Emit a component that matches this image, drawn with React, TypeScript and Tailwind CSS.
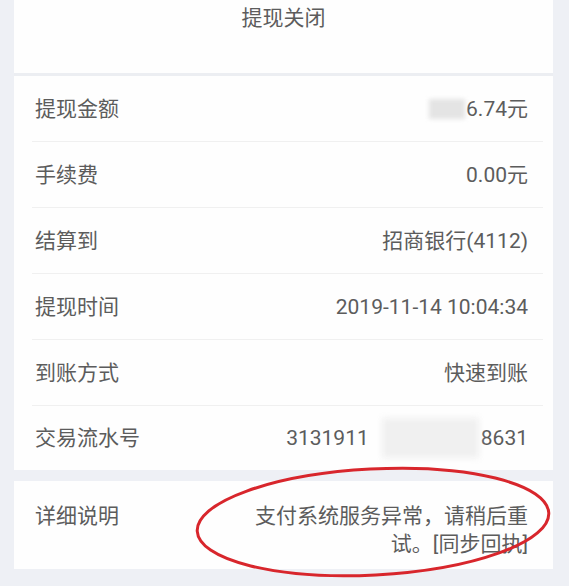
const rows: { label: string; value: React.ReactNode }[] = [
  {
    label: '提现金额',
    value: (
      <span className="flex items-center">
        <span className="mr-[1px] inline-block h-[20px] w-[36px] bg-[#e4e4e4] blur-[2px]" />
        6.74元
      </span>
    ),
  },
  { label: '手续费', value: '0.00元' },
  { label: '结算到', value: '招商银行(4112)' },
  { label: '提现时间', value: '2019-11-14 10:04:34' },
  { label: '到账方式', value: '快速到账' },
  {
    label: '交易流水号',
    value: (
      <span className="flex items-center">
        3131911
        <span className="ml-[13px] mr-[2px] inline-block h-[40px] w-[97px] bg-[#f0f0f0] blur-[3px]" />
        8631
      </span>
    ),
  },
];

export default function App() {
  return (
    <div className="relative min-h-[586px] bg-[#eef0f5] pl-[14px] pr-[16px] pb-[17px] font-[Roboto,'Noto_Sans_CJK_SC',sans-serif] text-[21px] leading-[28px] text-[#5c5c5c]">
      <div className="bg-[#fefefe]">
        <div className="flex h-[73px] justify-center pt-[4px]">提现关闭</div>
        <div className="h-[3px] bg-[#eceef2]" />
        {rows.map((row, i) => (
          <div
            key={row.label}
            className={
              i < rows.length - 1
                ? 'ml-[18px] mr-[10px] flex h-[66px] items-center justify-between border-b border-[#f0f0f0] pl-[3px] pr-[15px]'
                : 'ml-[18px] mr-[10px] flex h-[64px] items-center justify-between pl-[3px] pr-[15px]'
            }
          >
            <span>{row.label}</span>
            <span>{row.value}</span>
          </div>
        ))}
      </div>

      <div className="h-[11px]" />

      <div className="flex h-[88px] justify-between bg-[#fefefe] pl-[21px] pr-[25px] pt-[21px]">
        <span>详细说明</span>
        <span className="text-right">
          支付系统服务异常，请稍后重
          <br />
          试。[同步回执]
        </span>
      </div>

      <svg className="pointer-events-none absolute left-0 top-0" width="569" height="586">
        <ellipse
          cx="373"
          cy="522"
          rx="176"
          ry="53"
          transform="rotate(-3 373 522)"
          fill="none"
          stroke="#d8262c"
          strokeWidth="3"
        />
      </svg>
    </div>
  );
}
